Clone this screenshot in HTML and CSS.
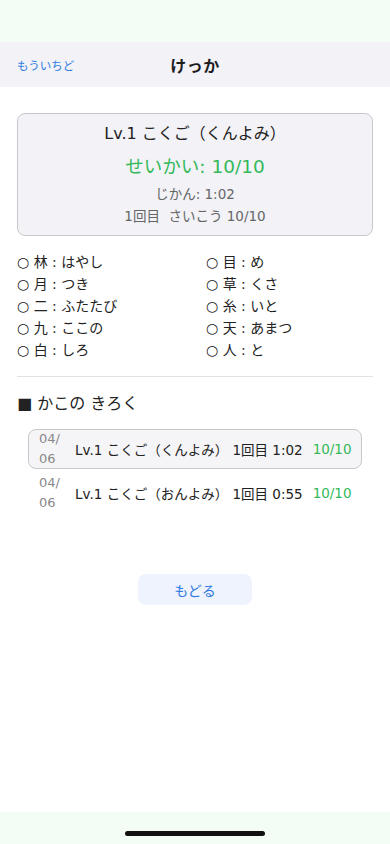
FILE: index.html
```html
<!DOCTYPE html>
<html lang="ja">
<head>
<meta charset="utf-8">
<meta name="viewport" content="width=device-width, initial-scale=1">
<link rel="stylesheet" href="styles.css">
</head>
<body>
<div class="status"></div>
<header class="nav">
  <a class="nav-back">もういちど</a>
  <h1 class="nav-title">けっか</h1>
  <span></span>
</header>
<main class="content">
  <section class="summary">
    <div class="summary-title">Lv.1 こくご（くんよみ）</div>
    <div class="summary-score">せいかい: 10/10</div>
    <div class="summary-sub">じかん: 1:02</div>
    <div class="summary-sub">1回目&nbsp; さいこう 10/10</div>
  </section>
  <ul class="answers">
    <li>○ 林 : はやし</li>
    <li>○ 目 : め</li>
    <li>○ 月 : つき</li>
    <li>○ 草 : くさ</li>
    <li>○ 二 : ふたたび</li>
    <li>○ 糸 : いと</li>
    <li>○ 九 : ここの</li>
    <li>○ 天 : あまつ</li>
    <li>○ 白 : しろ</li>
    <li>○ 人 : と</li>
  </ul>
  <hr class="divider">
  <h2 class="history-title">■ かこの きろく</h2>
  <ul class="history">
    <li class="history-row current">
      <span class="history-date">04/<br>06</span>
      <span class="history-text">Lv.1 こくご（くんよみ） 1回目 1:02</span>
      <span class="history-score">10/10</span>
    </li>
    <li class="history-row">
      <span class="history-date">04/<br>06</span>
      <span class="history-text">Lv.1 こくご（おんよみ） 1回目 0:55</span>
      <span class="history-score">10/10</span>
    </li>
  </ul>
  <div class="actions">
    <button class="back-btn">もどる</button>
  </div>
</main>
<footer class="home-area"><div class="home-indicator"></div></footer>
</body>
</html>
```

FILE: styles.css
```css
* { box-sizing: border-box; }
html, body { margin: 0; padding: 0; }
body {
  width: 390px;
  height: 844px;
  display: flex;
  flex-direction: column;
  background: #ffffff;
  font-family: "DejaVu Sans", "Noto Sans CJK JP", sans-serif;
  color: #222;
  overflow: hidden;
}
.status { height: 42px; background: #f3fdf5; flex: none; }
.nav {
  height: 45px;
  flex: none;
  background: #f2f2f7;
  display: grid;
  grid-template-columns: 1fr auto 1fr;
  align-items: center;
  padding: 0 17px;
}
.nav-back { font-size: 11.5px; color: #2f7be0; justify-self: start; }
.nav-title { margin: 0; font-size: 16px; font-weight: 700; color: #1c1c1e; letter-spacing: 0.5px; }
.content { flex: 1; padding: 26px 17px 0; }
.summary {
  background: #f2f2f7;
  border: 1px solid #c8c8cc;
  border-radius: 8px;
  padding: 9px 0 8px;
  text-align: center;
}
.summary-title { font-size: 16px; line-height: 22px; color: #222; }
.summary-score { font-size: 18.5px; line-height: 28px; margin-top: 8px; color: #34b95a; }
.summary-sub { font-size: 13.5px; line-height: 22px; color: #666; }
.summary-score + .summary-sub { margin-top: 2px; }
.answers {
  list-style: none;
  margin: 15px 0 0;
  padding: 0;
  display: grid;
  grid-template-columns: 189px 1fr;
  font-size: 14px;
  line-height: 22px;
  color: #222;
}
.divider { border: none; border-top: 1px solid #e2e2e2; margin: 15px 0 0; }
.history-title { margin: 15px 0 0; font-size: 16px; line-height: 24px; font-weight: 400; color: #222; }
.history { list-style: none; margin: 13px 11px 0; padding: 0; display: flex; flex-direction: column; gap: 4px; }
.history-row {
  display: flex;
  align-items: center;
  height: 40px;
  padding: 0 10px;
  border: 1px solid transparent;
  border-radius: 8px;
  font-size: 13.5px;
}
.history-row.current { background: #f5f5f7; border-color: #c8c8cc; }
.history-date { width: 36px; font-size: 13px; line-height: 20px; color: #888; flex: none; }
.history-text { color: #222; white-space: nowrap; }
.history-score { color: #34b95a; margin-left: 10px; white-space: nowrap; }
.actions { display: flex; justify-content: center; margin-top: 61px; }
.back-btn {
  width: 114px;
  height: 31px;
  border: none;
  border-radius: 8px;
  background: #eef3fd;
  color: #2f7be0;
  font-family: inherit;
  font-size: 14px;
}
.home-area { height: 32px; background: #f3fdf5; flex: none; display: flex; justify-content: center; align-items: flex-start; }
.home-indicator { width: 140px; height: 5px; border-radius: 3px; background: #111; margin-top: 19px; }
```
